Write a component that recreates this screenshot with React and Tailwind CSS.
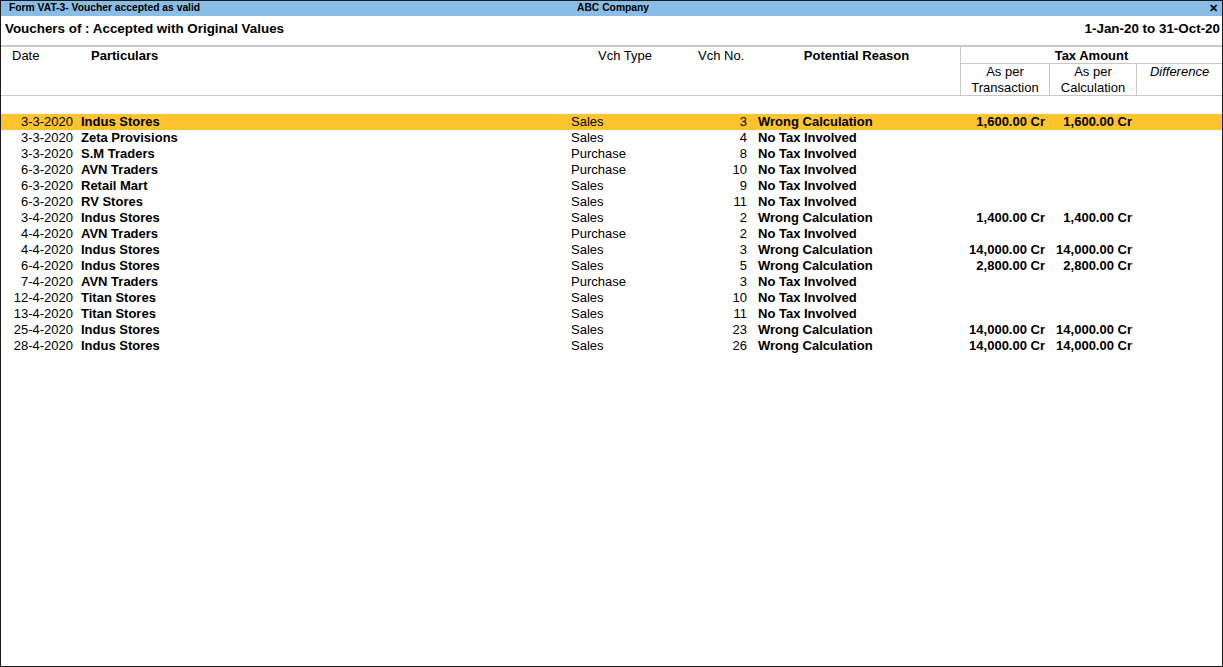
const rows = [
  ["3-3-2020", "Indus Stores", "Sales", "3", "Wrong Calculation", "1,600.00 Cr", "1,600.00 Cr"],
  ["3-3-2020", "Zeta Provisions", "Sales", "4", "No Tax Involved", "", ""],
  ["3-3-2020", "S.M Traders", "Purchase", "8", "No Tax Involved", "", ""],
  ["6-3-2020", "AVN Traders", "Purchase", "10", "No Tax Involved", "", ""],
  ["6-3-2020", "Retail Mart", "Sales", "9", "No Tax Involved", "", ""],
  ["6-3-2020", "RV Stores", "Sales", "11", "No Tax Involved", "", ""],
  ["3-4-2020", "Indus Stores", "Sales", "2", "Wrong Calculation", "1,400.00 Cr", "1,400.00 Cr"],
  ["4-4-2020", "AVN Traders", "Purchase", "2", "No Tax Involved", "", ""],
  ["4-4-2020", "Indus Stores", "Sales", "3", "Wrong Calculation", "14,000.00 Cr", "14,000.00 Cr"],
  ["6-4-2020", "Indus Stores", "Sales", "5", "Wrong Calculation", "2,800.00 Cr", "2,800.00 Cr"],
  ["7-4-2020", "AVN Traders", "Purchase", "3", "No Tax Involved", "", ""],
  ["12-4-2020", "Titan Stores", "Sales", "10", "No Tax Involved", "", ""],
  ["13-4-2020", "Titan Stores", "Sales", "11", "No Tax Involved", "", ""],
  ["25-4-2020", "Indus Stores", "Sales", "23", "Wrong Calculation", "14,000.00 Cr", "14,000.00 Cr"],
  ["28-4-2020", "Indus Stores", "Sales", "26", "Wrong Calculation", "14,000.00 Cr", "14,000.00 Cr"],
];

export default function App() {
  return (
    <div className="w-[1223px] h-[667px] border border-[#1b1b1b] bg-white text-black flex flex-col overflow-hidden font-['Liberation_Sans',Arial,sans-serif]">
      {/* title bar */}
      <div className="h-[15px] shrink-0 bg-[#89bde5] flex items-center text-[10.3px] font-bold leading-none relative">
        <span className="pl-[8px] w-[560px]">Form VAT-3- Voucher accepted as valid</span>
        <span className="pl-[16px]">ABC Company</span>
        <span className="absolute right-[4px] top-0 text-[11px] font-black leading-[15px]">✕</span>
      </div>

      {/* report heading */}
      <div className="h-[29px] shrink-0 flex items-center justify-between pl-[4px] pr-[2px] pb-[2px] text-[13.4px] font-bold">
        <span>Vouchers of : Accepted with Original Values</span>
        <span>1-Jan-20 to 31-Oct-20</span>
      </div>

      {/* column headers */}
      <div className="flex border-t-2 border-b border-t-[#c8c8c8] border-b-[#c8c8c8] text-[13px] leading-[16px] h-[51px] shrink-0">
        <div className="w-[72px] pl-[11px] pt-[1px]">Date</div>
        <div className="w-[498px] pl-[18px] pt-[1px] font-bold">Particulars</div>
        <div className="w-[127px] pl-[27px] pt-[1px]">Vch Type</div>
        <div className="w-[49px] pt-[1px]">Vch No.</div>
        <div className="w-[213px] pt-[1px] font-bold text-center pl-[6px]">Potential Reason</div>
        <div className="flex-1 border-l border-[#c8c8c8] flex flex-col">
          <div className="h-[17px] pt-[1px] border-b border-[#c8c8c8] text-center font-bold">Tax Amount</div>
          <div className="flex flex-1">
            <div className="w-[88px] text-center">As per<br />Transaction</div>
            <div className="w-[87px] border-l border-[#c8c8c8] text-center">As per<br />Calculation</div>
            <div className="flex-1 border-l border-[#c8c8c8] text-center italic">Difference</div>
          </div>
        </div>
      </div>

      {/* rows */}
      <div className="pt-[18px] text-[13px] leading-[16px]">
        {rows.map((r, i) => (
          <div key={i} className={`flex h-[16px] ${i === 0 ? "bg-[#fec42e]" : ""}`}>
            <div className="w-[72px] text-right">{r[0]}</div>
            <div className="w-[498px] pl-[8px] font-bold">{r[1]}</div>
            <div className="w-[130px]">{r[2]}</div>
            <div className="w-[46px] text-right">{r[3]}</div>
            <div className="w-[213px] pl-[11px] font-bold">{r[4]}</div>
            <div className="w-[88px] text-right pr-[3px] font-bold whitespace-nowrap">{r[5]}</div>
            <div className="w-[87px] text-right pr-[3px] font-bold whitespace-nowrap">{r[6]}</div>
            <div className="flex-1"></div>
          </div>
        ))}
      </div>
    </div>
  );
}
